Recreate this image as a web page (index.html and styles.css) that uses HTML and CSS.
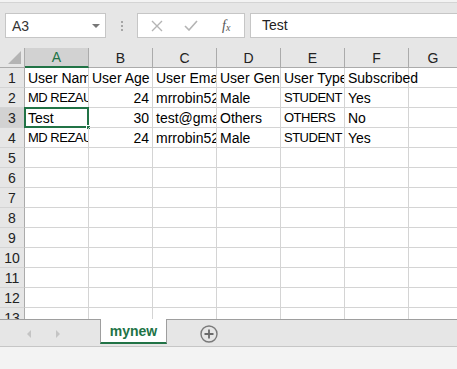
FILE: index.html
```html
<!DOCTYPE html>
<html lang="en">
<head>
  <meta charset="UTF-8" />
  <title>mynew - Excel</title>
  <link rel="stylesheet" href="styles.css">
</head>
<body>

<div class="toolbar">
  <div class="name-box">
    <span>A3</span>
    <span class="caret"></span>
  </div>
  <div class="grip"><i></i><i></i><i></i></div>
  <div class="fx-buttons">
    <svg class="fx-cancel" width="12" height="12" viewBox="0 0 12 12"><path d="M1 1 L11 11 M11 1 L1 11" stroke="#b4b4b4" stroke-width="1.4" fill="none"/></svg>
    <svg class="fx-enter" width="14" height="11" viewBox="0 0 14 11"><path d="M1 6 L5 10 L13 1" stroke="#b4b4b4" stroke-width="1.6" fill="none"/></svg>
    <span class="fx-label">f<sub>x</sub></span>
  </div>
  <div class="formula">Test</div>
</div>

<div class="sheet" id="sheet">
  <div class="corner"></div>
  <div class="col-head active">A</div>
  <div class="col-head">B</div>
  <div class="col-head">C</div>
  <div class="col-head">D</div>
  <div class="col-head">E</div>
  <div class="col-head">F</div>
  <div class="col-head last">G</div>

  <div class="row-head">1</div>
  <div class="cell">User Name</div>
  <div class="cell">User Age</div>
  <div class="cell">User Email</div>
  <div class="cell">User Gender</div>
  <div class="cell">User Type</div>
  <div class="cell spill">Subscribed</div>
  <div class="cell last"></div>

  <div class="row-head">2</div>
  <div class="cell caps">MD REZAUL KARIM</div>
  <div class="cell num">24</div>
  <div class="cell">mrrobin52@gmail.com</div>
  <div class="cell">Male</div>
  <div class="cell caps">STUDENT</div>
  <div class="cell">Yes</div>
  <div class="cell last"></div>

  <div class="row-head active">3</div>
  <div class="cell selected">Test</div>
  <div class="cell num">30</div>
  <div class="cell">test@gmail.com</div>
  <div class="cell">Others</div>
  <div class="cell caps">OTHERS</div>
  <div class="cell">No</div>
  <div class="cell last"></div>

  <div class="row-head">4</div>
  <div class="cell caps">MD REZAUL KARIM</div>
  <div class="cell num">24</div>
  <div class="cell">mrrobin52@gmail.com</div>
  <div class="cell">Male</div>
  <div class="cell caps">STUDENT</div>
  <div class="cell">Yes</div>
  <div class="cell last"></div>
</div>

<div class="tabbar">
  <div class="tab-nav">
    <span class="arrow left"></span>
    <span class="arrow right"></span>
  </div>
  <div class="tab">mynew</div>
  <svg class="add-sheet" width="20" height="20" viewBox="0 0 20 20">
    <circle cx="10" cy="10" r="8" stroke="#7a7a7a" stroke-width="1.4" fill="none"/>
    <path d="M10 5.5 V14.5 M5.5 10 H14.5" stroke="#6a6a6a" stroke-width="1.8"/>
  </svg>
</div>

<div class="statusbar"></div>

<script>
// empty rows 5..13
const sheet = document.getElementById('sheet');
for (let r = 5; r <= 13; r++) {
  let html = '<div class="row-head">' + r + '</div>';
  for (let c = 0; c < 7; c++) {
    html += '<div class="cell' + (c === 6 ? ' last' : '') + '"></div>';
  }
  sheet.insertAdjacentHTML('beforeend', html);
}
</script>

</body>
</html>
```

FILE: styles.css
```css
body { margin: 0; padding-top: 2px; width: 457px; height: 369px; overflow: hidden; background: #f3f3f3; font-family: 'Liberation Sans', Arial, sans-serif; color: #000; }

.toolbar { height: 46px; box-sizing: border-box; border-top: 1px solid #d4d4d4; background: #e6e6e6; display: flex; align-items: flex-start; padding: 10px 0 0 5px; }
.name-box { width: 101px; height: 25px; box-sizing: border-box; border: 1px solid #c6c6c6; background: #fff; display: flex; align-items: center; justify-content: space-between; padding: 0 5px 0 6px; font-size: 14px; color: #333; }
.caret { width: 0; height: 0; border-left: 4px solid transparent; border-right: 4px solid transparent; border-top: 4px solid #777; }
.grip { width: 31px; height: 25px; display: flex; flex-direction: column; align-items: center; justify-content: center; gap: 2px; }
.grip i { width: 2px; height: 2px; background: #a6a6a6; }
.fx-buttons { width: 108px; height: 25px; box-sizing: border-box; border: 1px solid #c6c6c6; background: #fff; display: flex; align-items: center; padding-left: 13px; }
.fx-enter { margin-left: 21px; }
.fx-label { margin-left: 24px; font-family: 'Liberation Serif', serif; font-style: italic; font-size: 14px; color: #555; }
.fx-label sub { font-size: 10px; vertical-align: -1px; }
.formula { flex: 1; margin-left: 5px; height: 25px; box-sizing: border-box; border: 1px solid #c6c6c6; border-right: none; background: #fff; font-size: 14px; line-height: 23px; padding-left: 11px; color: #222; }

.sheet { display: grid; grid-template-columns: 25px repeat(6, 64px) 1fr; grid-auto-rows: 20px; height: 271px; overflow: hidden; background: #fff; font-size: 14px; }
.corner { background: #e6e6e6; border-right: 1px solid #ababab; border-bottom: 1px solid #ababab; position: relative; }
.corner::after { content: ""; position: absolute; right: 3px; bottom: 3px; width: 0; height: 0; border-left: 13px solid transparent; border-bottom: 13px solid #b4b4b4; }
.col-head { background: #e6e6e6; border-right: 1px solid #ababab; border-bottom: 1px solid #ababab; display: flex; align-items: center; justify-content: center; color: #222; }
.col-head.last { border-right: none; }
.col-head.active { background: #d2d2d2; color: #217346; border-bottom: 2px solid #217346; }
.row-head { background: #e6e6e6; border-right: 1px solid #ababab; border-bottom: 1px solid #d4d4d4; display: flex; align-items: center; justify-content: center; color: #222; }
.row-head.active { background: #d2d2d2; }
.cell { border-right: 1px solid #d4d4d4; border-bottom: 1px solid #d4d4d4; padding: 0 3px; line-height: 20px; white-space: nowrap; overflow: hidden; text-overflow: clip; position: relative; }
.cell.caps { font-size: 13px; letter-spacing: -0.5px; }
.cell.spill { overflow: visible; z-index: 1; }
.cell.last { border-right: none; }
.cell.num { text-align: right; }
.cell.selected { overflow: visible; }
.cell.selected::before { content: ""; position: absolute; left: -1px; top: -1px; right: -1px; bottom: -1px; border: 2px solid #217346; }
.cell.selected::after { content: ""; position: absolute; right: -3px; bottom: -3px; width: 5px; height: 5px; background: #217346; border: 1px solid #fff; box-sizing: border-box; }

.tabbar { height: 28px; box-sizing: border-box; border-top: 1px solid #9e9e9e; border-bottom: 1px solid #c6c6c6; background: #e6e6e6; display: flex; align-items: flex-start; }
.tab-nav { width: 100px; height: 27px; display: flex; align-items: center; padding-left: 27px; box-sizing: border-box; gap: 25px; }
.arrow { width: 0; height: 0; border-top: 4px solid transparent; border-bottom: 4px solid transparent; }
.arrow.left { border-right: 4px solid #c4c4c4; }
.arrow.right { border-left: 4px solid #c4c4c4; }
.tab { width: 67px; height: 25px; margin-top: -1px; box-sizing: border-box; background: #fff; border-left: 1px solid #9e9e9e; border-right: 1px solid #9e9e9e; border-bottom: 2px solid #217346; font-weight: bold; font-size: 14px; color: #217346; text-align: center; line-height: 24px; }
.add-sheet { margin: 4px 0 0 32px; }

.statusbar { height: 22px; background: #f3f3f3; }
```
